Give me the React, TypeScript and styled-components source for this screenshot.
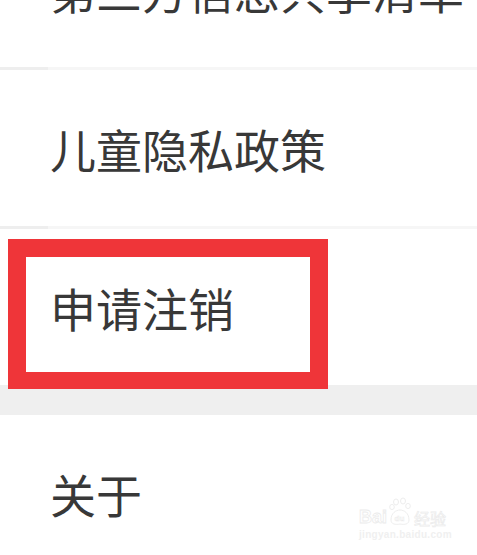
import React from "react";
import styled, { createGlobalStyle } from "styled-components";

const Global = createGlobalStyle`
  html, body { margin: 0; padding: 0; background: #ffffff; overflow: hidden; }
  body { font-family: "Noto Sans CJK SC", "Noto Sans", sans-serif; }
`;

const Page = styled.div`
  position: relative;
  width: 477px;
  height: 555px;
  overflow: hidden;
  background: #ffffff;
`;

const List = styled.div`
  display: flex;
  flex-direction: column;
  margin-top: -89px;
`;

const Row = styled.div`
  position: relative;
  height: 156px;
  display: flex;
  align-items: center;
  padding-left: 50px;
  background: #ffffff;
`;

const Label = styled.span`
  font-size: 46px;
  line-height: 1;
  color: #383838;
  white-space: nowrap;
`;

const Divider = styled.div`
  height: 3px;
  display: grid;
  grid-template-columns: 48px 1fr;
  & > span:first-child { background: #eeeeee; }
  & > span:last-child { background: #f6f6f6; }
`;

const Gap = styled.div`
  height: 30px;
  background: #efefef;
`;

const Highlight = styled.div`
  position: absolute;
  left: 8px;
  top: 10px;
  width: 320px;
  height: 150px;
  box-sizing: border-box;
  border: 18px solid #ef3539;
  border-bottom-width: 17px;
  z-index: 2;
`;

const Watermark = styled.div`
  position: absolute;
  left: 359px;
  top: 497px;
  display: flex;
  flex-direction: column;
  align-items: flex-start;
  font-family: "Liberation Sans", Arial, sans-serif;
  pointer-events: none;
`;

const MarkTop = styled.div`
  display: flex;
  align-items: flex-end;
  gap: 1px;
  height: 29px;
`;

const Bai = styled.span`
  font-size: 18px;
  font-weight: 700;
  line-height: 1;
  color: transparent;
  -webkit-text-stroke: 0.8px #ebebeb;
`;

const Jy = styled.span`
  font-family: "Noto Sans CJK SC", sans-serif;
  font-size: 16px;
  line-height: 1;
  color: transparent;
  -webkit-text-stroke: 0.7px #ebebeb;
  margin-left: 1px;
`;

const Url = styled.span`
  font-size: 10px;
  font-weight: 700;
  line-height: 1;
  margin-top: 4px;
  letter-spacing: 0.3px;
  color: #f0f0f0;
`;

const Paw = () => (
  <svg width="24" height="29" viewBox="0 0 24 29" fill="none" stroke="#ebebeb" strokeWidth="0.9">
    <ellipse cx="8" cy="5" rx="2.5" ry="3" />
    <ellipse cx="15" cy="4" rx="2.5" ry="3" />
    <ellipse cx="20" cy="9" rx="2.3" ry="2.6" />
    <ellipse cx="4" cy="10" rx="2.3" ry="2.6" />
    <path d="M3 23 C3 16 8 13 12 13 C16 13 21 16 21 23 C21 27 17 28 12 27 C7 28 3 27 3 23 Z" />
    <text x="6.5" y="24" fontSize="8" fontFamily="Liberation Sans, sans-serif" fontWeight="700" fill="none" stroke="#ebebeb" strokeWidth="0.5">du</text>
  </svg>
);

export default function App() {
  return (
    <Page>
      <Global />
      <List>
        <Row><Label>第三方信息共享清单</Label></Row>
        <Divider><span /><span /></Divider>
        <Row><Label>儿童隐私政策</Label></Row>
        <Divider><span /><span /></Divider>
        <Row>
          <Label>申请注销</Label>
          <Highlight />
        </Row>
        <Gap />
        <Row><Label>关于</Label></Row>
      </List>
      <Watermark>
        <MarkTop>
          <Bai>Bai</Bai>
          <Paw />
          <Jy>经验</Jy>
        </MarkTop>
        <Url>jingyan.baidu.com</Url>
      </Watermark>
    </Page>
  );
}
